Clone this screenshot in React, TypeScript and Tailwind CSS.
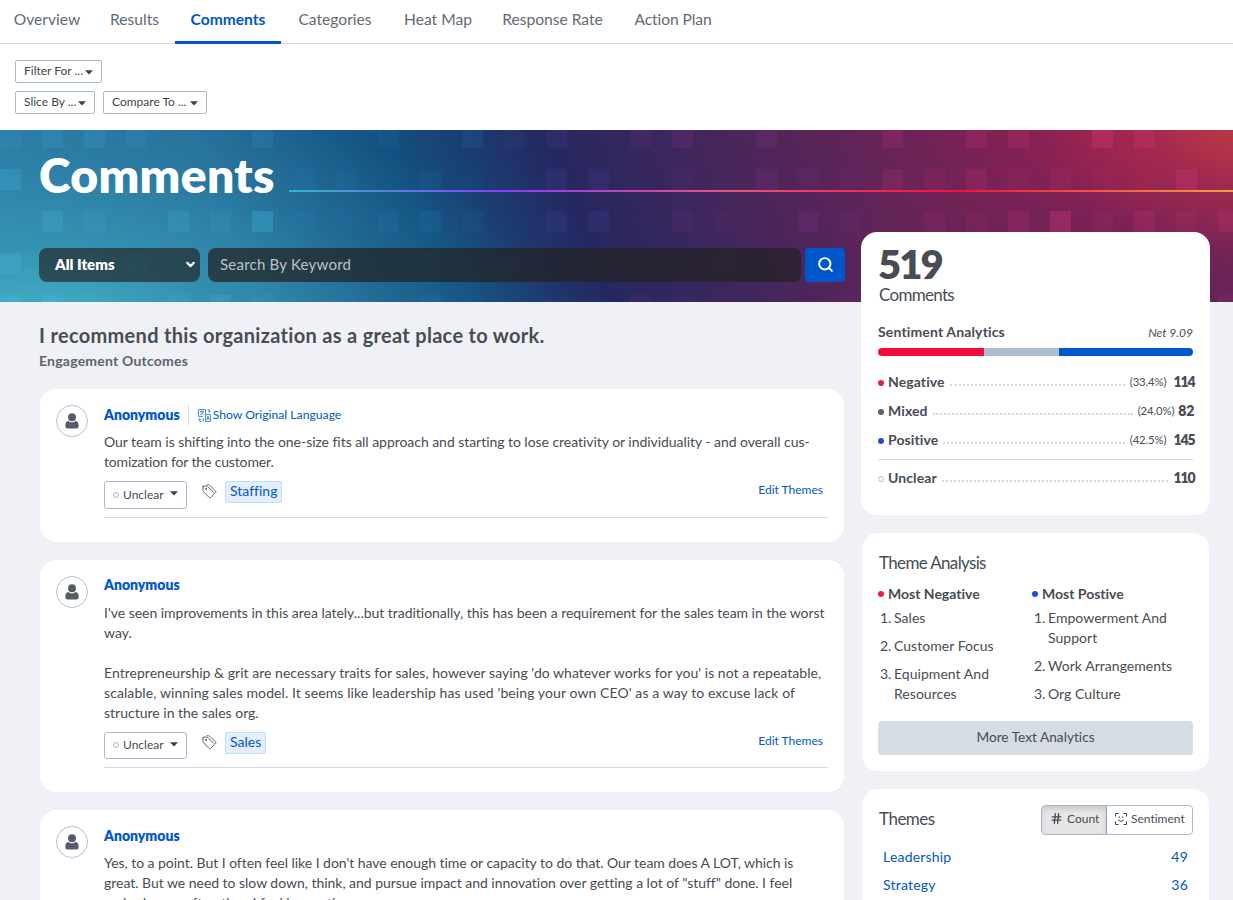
import { ReactNode } from "react";
import clsx from "clsx";
import { ChevronDown, Hash, Search } from "lucide-react";

const tabs = [
  { label: "Overview", width: "w-24", className: "pl-0.5" },
  { label: "Results", width: "w-[81px]" },
  { label: "Comments", width: "w-[106px]" },
  { label: "Categories", width: "w-[107px]", className: "pl-px" },
  { label: "Heat Map", width: "w-[98px]", className: "pl-0.5" },
  { label: "Response Rate", width: "w-[133px]" },
  { label: "Action Plan", width: "w-[108px]", className: "tracking-[-0.1px]" },
];

// [row, column, opacity] on a 42px grid
const squares: [number, number, number][] = [
  [0, 0, 0.1], [0, 1, 0.15], [0, 2, 0.16], [0, 3, 0.1], [0, 6, 0.12], [0, 9, 0.14],
  [0, 11, 0.18], [0, 12, 0.12], [0, 13, 0.18], [0, 15, 0.14], [0, 16, 0.2], [0, 18, 0.2],
  [0, 21, 0.16], [0, 23, 0.16], [0, 24, 0.18], [0, 26, 0.28], [0, 27, 0.2],
  [1, 0, 0.25], [1, 2, 0.05], [1, 4, 0.06], [1, 7, 0.16], [1, 8, 0.12], [1, 10, 0.12], [1, 11, 0.04],
  [1, 12, 0.03], [1, 13, 0.18], [1, 14, 0.18], [1, 15, 0.03], [1, 16, 0.07], [1, 17, 0.05],
  [1, 18, 0.2], [1, 19, 0.1], [1, 20, 0.07], [1, 21, 0.16], [1, 22, 0.1], [1, 23, 0.15],
  [1, 24, 0.06], [1, 25, 0.12], [1, 26, 0.05], [1, 27, 0.04], [1, 28, 0.24], [1, 29, 0.05],
  [2, 1, 0.24], [2, 2, 0.14], [2, 4, 0.2], [2, 5, 0.1], [2, 6, 0.32], [2, 7, 0.18], [2, 8, 0.08],
  [2, 9, 0.18], [2, 10, 0.18], [2, 11, 0.1], [2, 13, 0.18], [2, 14, 0.18], [2, 16, 0.12],
  [2, 17, 0.08], [2, 19, 0.2], [2, 20, 0.1], [2, 22, 0.1], [2, 23, 0.07], [2, 24, 0.16],
  [2, 25, 0.3], [2, 26, 0.1], [2, 27, 0.18], [2, 28, 0.1], [2, 29, 0.18],
  [3, 0, 0.3], [3, 2, 0.12], [3, 3, 0.16], [3, 5, 0.05], [3, 10, 0.2], [3, 12, 0.15], [3, 15, 0.12], [3, 17, 0.12],
  [4, 0, 0.35], [4, 1, 0.35], [4, 2, 0.08], [4, 3, 0.08], [4, 4, 0.15], [4, 5, 0.25], [4, 6, 0.1],
  [4, 7, 0.05], [4, 8, 0.2], [4, 9, 0.08], [4, 10, 0.22], [4, 11, 0.06], [4, 12, 0.06], [4, 13, 0.08],
  [4, 15, 0.16], [4, 16, 0.05], [4, 17, 0.05], [4, 20, 0.14], [4, 29, 0.12],
];

function squareColor(col: number) {
  if (col < 7) return "#44b4e0";
  if (col < 12) return "#2678c0";
  if (col < 15) return "#4b4aa0";
  if (col < 21) return "#8a3490";
  return "#dc3a80";
}

function Caret({ className }: { className?: string }) {
  return (
    <svg viewBox="0 0 8 5" className={clsx("h-[5px] w-2 shrink-0 fill-[#3c4148]", className)}>
      <path d="M0 .3h8L4 4.6z" />
    </svg>
  );
}

function TagsIcon() {
  return (
    <svg viewBox="0 0 15 15" className="h-[15px] w-[15px] fill-none stroke-[#5f6670]" strokeLinejoin="round" strokeLinecap="round">
      <path d="M1 2.8V6.6q0 .6.5 1.100l5.700 5.800q.8.700 1.500 0l3.200-3.300q.7-.7 0-1.500L6.200 2.900Q5.700 2.400 5 2.300L2 1.900Q1 1.800 1 2.800z" />
      <path d="M5 .8h1.600q.7 0 1.200.5l5.900 5.900q.7.700 0 1.400" />
      <circle cx="3.9" cy="4.9" r=".6" />
    </svg>
  );
}

function TranslateIcon() {
  return (
    <svg viewBox="0 0 13 13" className="h-[13px] w-[13px] fill-none stroke-[#2a72d4]" strokeWidth=".8">
      <path d="M5 7.500H.5v-7h7V5M2 2.500h4M4 1.500v1M2.300 5.500Q4.500 5 5.300 2.600M2.700 3.300Q4 5 5.600 5.500" />
      <path d="M7.500 5.500h5v7h-5zM8.600 11l1.400-4 1.400 4M9 9.700h2M9.300.8h2v2.400M10.200 2.200l1.100 1.200 1.100-1.200M3.700 12.300h-2V9.800M.6 10.800l1.100-1.200 1.100 1.200M5.200 9v3.500" />
    </svg>
  );
}

function FaceScanIcon() {
  return (
    <svg viewBox="0 0 12 12" className="h-3 w-3 fill-none stroke-[#3f444b]">
      <path d="M.5 3.500v-3h3M8.500.5h3v3M11.500 8.500v3h-3M3.500 11.500h-3v-3" />
      <path d="M4.300 3.400v1.400M7.700 3.400v1.400M3.200 7q2.800 3 5.600 0" />
    </svg>
  );
}

function Avatar() {
  return (
    <div className="flex h-8 w-8 shrink-0 items-center justify-center rounded-full border border-[#b0c0d6]">
      <svg viewBox="0 0 14 16" className="h-4 w-3.5 fill-[#535c68]">
        <circle cx="7" cy="4.2" r="4" />
        <path d="M3.200 8q1.700 1.400 3.800 1.400T10.800 8Q13.600 8.800 13.600 12v1.600q0 1.900-1.900 1.900H2.300Q.4 15.500.4 13.600V12Q.4 8.800 3.200 8z" />
      </svg>
    </div>
  );
}

function FilterButton({ label, width, gap }: { label: string; width: string; gap: string }) {
  return (
    <button className={clsx("flex h-[23px] items-center rounded-[2px] border border-[#a9b9d0] pb-px pl-2 text-[12px] text-[#3f444b]", width, gap)}>
      <span>{label}</span>
      <Caret className="mt-[3px]" />
    </button>
  );
}

function Card({ className, children }: { className?: string; children: ReactNode }) {
  return <section className={clsx("rounded-2xl bg-white", className)}>{children}</section>;
}

interface Line {
  text: string;
  tracking?: string;
}

interface CommentProps {
  lines: Line[];
  theme: string;
  translatable?: boolean;
}

function Comment({ lines, theme, translatable }: CommentProps) {
  return (
    <Card className="flex gap-4 px-4 pt-4 pb-6">
      <Avatar />
      <div className="min-w-0 flex-1">
        <div className="flex h-5 items-center">
          <a className="-mt-px text-[14px] leading-5 font-extrabold text-[#0057cc]">Anonymous</a>
          {translatable && (
            <a className="ml-2 flex h-5 items-center gap-0.5 border-l border-[#d5dbe5] pl-[9px] text-[12.2px] text-[#0057cc]">
              <TranslateIcon />
              Show Original Language
            </a>
          )}
        </div>
        <div className="mt-[7px] text-[14px] leading-5 whitespace-nowrap text-[#484c54]">
          {lines.map(({ text, tracking }, i) => (
            <p key={i} className={clsx("h-5", tracking)}>{text}</p>
          ))}
        </div>
        <div className="mt-[9px] flex h-[27.4px] items-start">
          <button className="flex h-full w-[83px] items-center rounded-[3px] border border-[#a9b9d0] pl-2 text-[12px] text-[#484c54]">
            <span className="mr-1 h-1.5 w-1.5 rounded-full border border-[#a9b9d0]" />
            Unclear
            <Caret className="mb-0.5 ml-1.5" />
          </button>
          <span className="mt-[3px] ml-[15px]"><TagsIcon /></span>
          <span className="ml-2 h-[22px] rounded-[2px] border border-[#c3dcfb] bg-[#e4effe] px-1 text-[14px] leading-[18px] text-[#0057cc]">
            {theme}
          </span>
          <a className="mr-[5px] ml-auto text-[12px] leading-[18px] text-[#0057cc]">Edit Themes</a>
        </div>
        <div className="mt-2 h-px bg-[#d5dbe5]" />
      </div>
    </Card>
  );
}

interface SentimentRowProps {
  label: string;
  dot: string;
  percent?: string;
  count: number;
  gap?: string;
}

function SentimentRow({ label, dot, percent, count, gap }: SentimentRowProps) {
  return (
    <div className="flex h-[29px] items-center text-[#484c54]">
      <span className={clsx("mt-px mr-1 h-1.5 w-1.5 shrink-0 rounded-full", dot)} />
      <span className="-mt-0.5 text-[14px] font-bold tracking-[0.1px]">{label}</span>
      <span className="mx-[5px] mt-[5px] h-0 flex-1 border-t-2 border-dotted border-[#d5dbe3]" />
      {percent && <span className={clsx("-mt-px text-[11.300px] tracking-[-0.1px]", gap)}>({percent})</span>}
      <span
        className={clsx(
          "-mt-[3px] text-[14px] font-extrabold",
          count < 100 ? "-mr-px tracking-[-0.3px]" : "-mr-[1.5px] tracking-[-1.1px]"
        )}
      >
        {count}
      </span>
    </div>
  );
}

function ThemeList({ title, dot, items }: { title: string; dot: string; items: string[] }) {
  return (
    <div>
      <h4 className="-mt-px flex h-5 items-center text-[14px] font-bold">
        <span className={clsx("mt-px mr-1 h-1.5 w-1.5 rounded-full", dot)} />
        {title}
      </h4>
      <ol className="mt-[5px] space-y-2 pl-0.5 text-[14px] leading-5 tracking-[0.04px]">
        {items.map((item, i) => (
          <li key={item} className="flex">
            <span className="w-3.5 shrink-0 tracking-[-0.2px]">{i + 1}.</span>
            <span className="whitespace-pre-line">{item}</span>
          </li>
        ))}
      </ol>
    </div>
  );
}

export default function App() {
  return (
    <div className="h-[900px] w-[1233px] overflow-hidden bg-[#f0f1f6] font-['Lato','Liberation_Sans',sans-serif] text-[#484c54] [font-variant-ligatures:none]">
      <div className="h-[130px] bg-white">
        <nav className="flex h-11 border-b border-[#d5dbe3]">
          <div className="-ml-0.5 flex">
            {tabs.map(({ label, width, className }) => (
              <a
                key={label}
                className={clsx(
                  "h-11 border-b-[3px] text-center text-[15.6px] leading-[39px] whitespace-nowrap",
                  width,
                  className,
                  label === "Comments"
                    ? "border-[#0057cc] font-bold text-[#0057cc]"
                    : "border-transparent text-[#626a75]"
                )}
              >
                {label}
              </a>
            ))}
          </div>
        </nav>
        <div className="flex flex-col gap-2 px-[15px] pt-4">
          <FilterButton label="Filter For ..." width="w-[87px]" gap="gap-0.5" />
          <div className="flex gap-2">
            <FilterButton label="Slice By ..." width="w-20" gap="gap-0.5" />
            <FilterButton label="Compare To ..." width="w-[104px]" gap="gap-1" />
          </div>
        </div>
      </div>

      {/* Banner */}
      <header className="relative h-[172px] overflow-hidden bg-[radial-gradient(ellipse_520px_240px_at_3%_115%,#46b2c8_0%,#3a9fb8a0_35%,#3390b040_68%,#3390b000_100%),radial-gradient(ellipse_220px_150px_at_102%_-10%,#bd3e42_0%,#b8344866_50%,#b0304a00_100%),radial-gradient(ellipse_460px_180px_at_100%_115%,#5c2459_0%,#5c245999_50%,#5c245900_100%),linear-gradient(68deg,#2d7fa8_0%,#26709b_20%,#12507f_35%,#252860_47%,#552559_66%,#962052_90%,#a02450_100%)]">
        <svg viewBox="0 0 1233 172" className="absolute inset-0 h-full w-full">
          {squares.map(([row, col, opacity]) => (
            <rect key={`${row}-${col}`} x={col * 42} y={row * 42 - 3} width="21" height="21" fill={squareColor(col)} opacity={opacity} />
          ))}
        </svg>
        <div className="relative pt-[18px] pl-[39px]">
          <div className="flex h-[56px] items-center">
            <h1 className="-mt-0.5 w-[250px] text-[48px] leading-[56px] font-extrabold tracking-[0.3px] text-white">Comments</h1>
            <div className="mt-[30px] h-0.5 flex-1 bg-[linear-gradient(90deg,#30b8c4_0%,#8a3cff_23%,#f0507a_47%,#f5103a_71%,#f0a040_100%)]" />
          </div>
          <div className="mt-11 flex h-[34px]">
            <button className="flex w-[161px] items-center justify-between rounded-lg bg-[#222222]/65 pr-[3px] pb-px pl-4 text-[15px] font-extrabold text-white">
              All Items
              <ChevronDown size={13} strokeWidth={4} />
            </button>
            <div className="ml-2 flex w-[593px] items-center rounded-lg bg-[#222222]/72 pb-0.5 pl-3 text-[15px] tracking-[0.23px] text-[#bfc1c4]">
              Search By Keyword
            </div>
            <button className="ml-1 flex w-10 items-center justify-center rounded bg-[#0057cc] text-white">
              <Search size={17} strokeWidth={2.8} className="-mt-0.5" />
            </button>
          </div>
        </div>
      </header>

      <div className="flex">
        <main className="ml-10 w-[804px] pt-[19px]">
          <h2 className="-ml-px text-[20px] leading-7 font-bold tracking-[0.31px] text-[#484c54]">
            I recommend this organization as a great place to work.
          </h2>
          <h3 className="mt-0.5 -ml-px text-[14px] leading-5 font-bold tracking-[0.22px] text-[#5c6470]">Engagement Outcomes</h3>
          <div className="mt-[18.3px] flex flex-col gap-[18px]">
            <Comment
              translatable
              theme="Staffing"
              lines={[
                { text: "Our team is shifting into the one-size fits all approach and starting to lose creativity or individuality - and overall cus-", tracking: "tracking-[-0.045px]" },
                { text: "tomization for the customer.", tracking: "tracking-[-0.15px]" },
              ]}
            />
            <Comment
              theme="Sales"
              lines={[
                { text: "I've seen improvements in this area lately...but traditionally, this has been a requirement for the sales team in the worst", tracking: "tracking-[-0.025px]" },
                { text: "way." },
                { text: "" },
                { text: "Entrepreneurship & grit are necessary traits for sales, however saying 'do whatever works for you' is not a repeatable,", tracking: "tracking-[0.03px]" },
                { text: "scalable, winning sales model. It seems like leadership has used 'being your own CEO' as a way to excuse lack of", tracking: "tracking-[0.09px]" },
                { text: "structure in the sales org." },
              ]}
            />
            <Comment
              theme="Innovation"
              lines={[
                { text: "Yes, to a point. But I often feel like I don't have enough time or capacity to do that. Our team does A LOT, which is", tracking: "tracking-[-0.04px]" },
                { text: "great. But we need to slow down, think, and pursue impact and innovation over getting a lot of \"stuff\" done. I feel", tracking: "tracking-[-0.03px]" },
                { text: "rushed more often than I feel innovative." },
              ]}
            />
          </div>
        </main>

        <aside className="relative -mt-[70px] ml-[17px] flex w-[349px] flex-col gap-[18px]">
          <Card className="h-[283px] pt-3 pr-[17px] pl-[17px]">
            <p className="h-10 text-[40px] leading-[40px] font-extrabold tracking-[-2px]">519</p>
            <p className="mt-px ml-px text-[17px] leading-5 tracking-[-0.7px]">Comments</p>
            <div className="mt-[17px] flex h-5 items-center justify-between">
              <h3 className="-mt-px text-[14px] font-bold tracking-[0.15px]">Sentiment Analytics</h3>
              <span className="mt-px text-[12px] italic">Net 9.09</span>
            </div>
            <div className="mt-[6px] mb-3 flex h-2 overflow-hidden rounded-full">
              <div className="w-[106px] bg-[#f20d3a]" />
              <div className="w-[75px] bg-[#b0bdd0]" />
              <div className="flex-1 bg-[#0057cc]" />
            </div>
            <SentimentRow label="Negative" dot="bg-[#ed1b3c]" percent="33.4%" count={114} gap="mr-[7px]" />
            <SentimentRow label="Mixed" dot="bg-[#56606c]" percent="24.0%" count={82} gap="mr-1" />
            <SentimentRow label="Positive" dot="bg-[#1a4ae8]" percent="42.5%" count={145} gap="mr-[7px]" />
            <div className="mt-1 mb-1 h-px bg-[#d5dbe5]" />
            <SentimentRow label="Unclear" dot="border border-[#b0bdd0]" count={110} />
          </Card>

          <Card className="mr-px ml-px h-[238px] pt-5 pr-4 pl-4">
            <h3 className="ml-px text-[17px] leading-5 tracking-[-0.65px]">Theme Analysis</h3>
            <div className="mt-[11px] grid grid-cols-[154px_1fr]">
              <ThemeList title="Most Negative" dot="bg-[#ed1b3c]" items={["Sales", "Customer Focus", "Equipment And\nResources"]} />
              <ThemeList title="Most Postive" dot="bg-[#1a4ae8]" items={["Empowerment And\nSupport", "Work Arrangements", "Org Culture"]} />
            </div>
            <button className="mt-[17px] h-[34px] w-[315px] rounded bg-[#d5dce4] pb-0.5 text-[13.7px]">More Text Analytics</button>
          </Card>

          <Card className="mr-px ml-px h-[238px] pt-4 pr-4 pl-4">
            <div className="flex h-[30px] items-start justify-between">
              <h3 className="ml-px text-[17px] leading-[28px] tracking-[-0.5px]">Themes</h3>
              <div className="flex h-[30px] w-[152px] overflow-hidden rounded border border-[#a9b9d0] text-[12px]">
                <button className="flex w-[65px] items-center gap-1 border-r border-[#8aa2bf] bg-[#e6e6e6] pb-[3px] pl-2 shadow-[inset_0_3px_5px_rgba(0,0,0,0.13)]">
                  <Hash size={13} strokeWidth={2.4} />
                  Count
                </button>
                <button className="flex flex-1 items-center gap-1 pb-[3px] pl-2">
                  <FaceScanIcon />
                  Sentiment
                </button>
              </div>
            </div>
            <ul className="mt-2 px-[5px] text-[14px] leading-7 tracking-[0.2px] text-[#0057cc]">
              <li className="flex justify-between"><a>Leadership</a><span>49</span></li>
              <li className="flex justify-between"><a>Strategy</a><span>36</span></li>
            </ul>
          </Card>
        </aside>
      </div>
    </div>
  );
}
